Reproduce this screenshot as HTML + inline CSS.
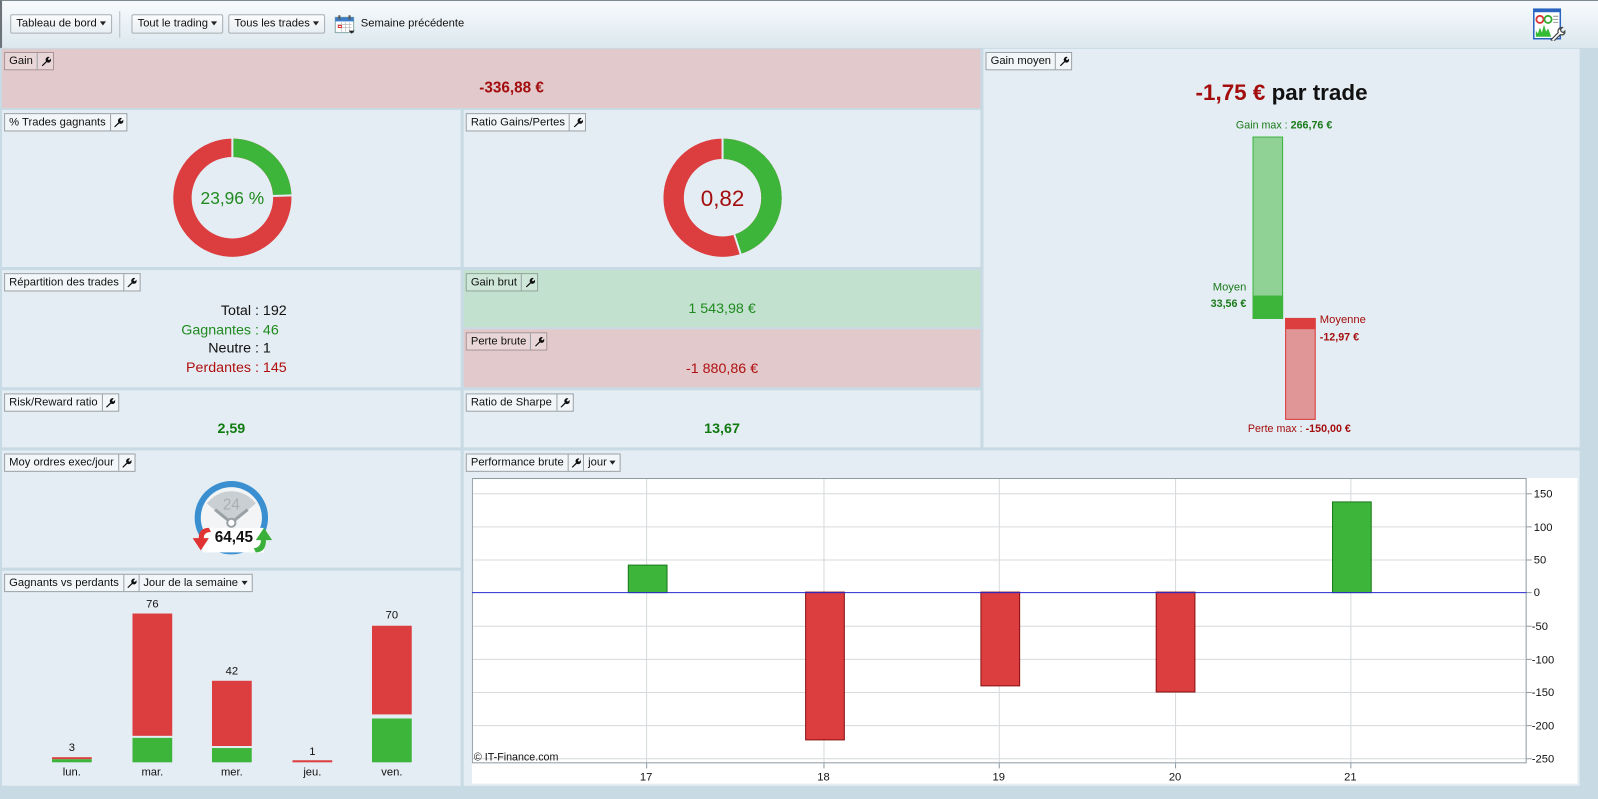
<!DOCTYPE html>
<html><head><meta charset="utf-8"><style>
*{margin:0;padding:0;box-sizing:border-box}
html,body{width:1598px;height:799px;overflow:hidden;background:#c8dae4;font-family:"Liberation Sans",sans-serif}
#w{position:absolute;left:0;top:0;width:1568px;height:784px;transform:scale(1.01913);transform-origin:0 0;background:#c8dae4}
.a{position:absolute}
.p{position:absolute;background:#e4edf3}
.tab{position:absolute;left:2px;top:3px;height:18px;display:flex;font-size:11px;color:#111;background:#f3f6f8;border:1px solid #9aa3a8}
.tab>span{padding:0 4px;line-height:16px;border-right:1px solid #9aa3a8;white-space:nowrap}
.tab>span:last-child{border-right:none}
.tab>.wr{width:15px;padding:0;display:flex;align-items:center;justify-content:center}
.btn{position:absolute;top:14px;height:19px;font-size:11px;line-height:17px;padding:0 5px;border:1px solid #a8afb4;border-radius:2px;background:linear-gradient(#fbfcfd,#e8eef2);color:#111}
.dd{display:inline-block;width:0;height:0;border-left:3.5px solid transparent;border-right:3.5px solid transparent;border-top:4px solid #222;vertical-align:middle;margin-left:3px}
.c{position:absolute;text-align:center}
</style></head><body><div id="w">
<svg width="0" height="0" style="position:absolute"><defs><symbol id="wr" viewBox="0 0 10 10"><path d="M1 9.2L5.2 5a2.6 2.6 0 0 1 .6-3.6 2.7 2.7 0 0 1 2.9-.4L7 2.7l.4 1 1 .3 1.6-1.6a2.7 2.7 0 0 1-.4 2.9A2.6 2.6 0 0 1 6 6L1.8 10z" fill="#111"/></symbol></defs></svg>
<!-- toolbar -->
<div class="a" style="left:0;top:0;width:1568px;height:47px;background:linear-gradient(#f8fbfd,#dbe7ee);border-top:1px solid #7f8a90;border-left:2px solid #6c7378"></div>
<div class="btn" style="left:10px">Tableau de bord<span class="dd"></span></div>
<div class="a" style="left:117px;top:11px;width:1px;height:26px;background:#b5bec4"></div>
<div class="btn" style="left:129px">Tout le trading<span class="dd"></span></div>
<div class="btn" style="left:224px">Tous les trades<span class="dd"></span></div>
<svg class="a" style="left:328px;top:14px" width="21" height="20" viewBox="0 0 21 20"><rect x="1" y="3" width="18" height="15" fill="#fff" stroke="#8aa"/><rect x="1" y="3" width="18" height="4" fill="#3a7cc8"/><rect x="4" y="1" width="2" height="4" fill="#555"/><rect x="14" y="1" width="2" height="4" fill="#555"/><path d="M3 10h14M3 13h14M7 8v9M11 8v9M15 8v9" stroke="#bbb" stroke-width=".7"/><rect x="4" y="11" width="3" height="2" fill="none" stroke="#d33"/><path d="M14 16h6l-3 3z" fill="#222"/></svg>
<div class="a" style="left:354px;top:17px;font-size:11px;color:#111">Semaine précédente</div>
<svg class="a" style="left:1504px;top:8px" width="32" height="32" viewBox="0 0 32 32"><rect x="1" y="1" width="26" height="29" fill="#fff" stroke="#2a64c0" stroke-width="1.5"/><rect x="1" y="1" width="26" height="3" fill="#2a64c0"/><circle cx="7" cy="11" r="3.5" fill="none" stroke="#d33" stroke-width="1.8"/><circle cx="15" cy="11" r="3.5" fill="none" stroke="#3a3" stroke-width="1.8"/><path d="M20 8h5M20 11h5M20 14h5" stroke="#999"/><path d="M3 28V22l2 3 2-6 2 5 2-8 2 7 2-3 2 5 1 3z" fill="#3b3"/><path d="M18 31l7-7c-1-3 1-5 4-5l-2 2 1 2 2 1 2-2c0 3-2 5-5 4l-7 7z" fill="#fff" stroke="#444" stroke-width="1.2"/></svg>

<!-- Gain -->
<div class="p" style="left:2px;top:48px;width:960px;height:58px;background:#e2c9cc"><div class="tab" style="border-color:#a79596;background:#e9d6d8"><span>Gain</span><span class="wr"><svg width="10" height="10"><use href="#wr"/></svg></span></div>
<div class="c" style="left:0;width:1000px;top:30px;font-size:15px;font-weight:bold;color:#a30d0d">-336,88 €</div></div>

<!-- Gain moyen -->
<div class="p" style="left:965px;top:48px;width:585px;height:391px">
<div class="tab"><span>Gain moyen</span><span class="wr"><svg width="10" height="10"><use href="#wr"/></svg></span></div>
<div class="c" style="left:0;width:585px;top:30px;font-size:22px;font-weight:bold;color:#111"><span style="color:#a30d0d">-1,75 €</span> par trade</div>
<div class="c" style="left:195px;width:200px;top:69px;font-size:10.5px;color:#1a7a1a">Gain max : <b>266,76 €</b></div>
<div class="a" style="left:264px;top:86px;width:30px;height:179px;background:#90d196;border:1px solid #3db53d"></div>
<div class="a" style="left:264px;top:242px;width:30px;height:23px;background:#3db43a"></div>
<div class="a" style="left:196px;top:228px;width:62px;text-align:right;font-size:11px;color:#1a7a1a">Moyen</div>
<div class="a" style="left:196px;top:244px;width:62px;text-align:right;font-size:10.5px;font-weight:bold;color:#1a7a1a">33,56 €</div>
<div class="a" style="left:296px;top:264px;width:30px;height:100px;background:#e09597;border:1px solid #d84040"></div>
<div class="a" style="left:296px;top:264px;width:30px;height:11px;background:#dc3d3e"></div>
<div class="a" style="left:330px;top:260px;font-size:11px;color:#a30d0d">Moyenne</div>
<div class="a" style="left:330px;top:277px;font-size:10.5px;font-weight:bold;color:#a30d0d">-12,97 €</div>
<div class="c" style="left:210px;width:200px;top:367px;font-size:10.5px;color:#a30d0d">Perte max : <b>-150,00 €</b></div>
</div>

<!-- % trades gagnants -->
<div class="p" style="left:2px;top:108px;width:450px;height:154px"><div class="tab"><span>% Trades gagnants</span><span class="wr"><svg width="10" height="10"><use href="#wr"/></svg></span></div>
<svg class="a" style="left:166px;top:26px" width="120" height="120" viewBox="0 0 120 120"><g transform="rotate(-90 60 60)"><circle cx="60" cy="60" r="49" fill="none" stroke="#dc3d3e" stroke-width="18"/><circle cx="60" cy="60" r="49" fill="none" stroke="#3db43a" stroke-width="18" stroke-dasharray="75 400"/></g><path d="M60 1V22M99 58.3L119 57.7" stroke="#e4edf3" stroke-width="2"/></svg>
<div class="c" style="left:166px;width:120px;top:77px;font-size:17px;color:#1f8a1f">23,96 %</div></div>

<!-- Ratio -->
<div class="p" style="left:455px;top:108px;width:507px;height:154px"><div class="tab"><span>Ratio Gains/Pertes</span><span class="wr"><svg width="10" height="10"><use href="#wr"/></svg></span></div>
<svg class="a" style="left:194px;top:26px" width="120" height="120" viewBox="0 0 120 120"><g transform="rotate(-90 60 60)"><circle cx="60" cy="60" r="48" fill="none" stroke="#dc3d3e" stroke-width="20"/><circle cx="60" cy="60" r="48" fill="none" stroke="#3db43a" stroke-width="20" stroke-dasharray="136 400"/></g><path d="M60 1V22M71.5 96L78 116" stroke="#e4edf3" stroke-width="2"/></svg>
<div class="c" style="left:194px;width:120px;top:74px;font-size:22px;color:#a30d0d">0,82</div></div>

<!-- Repartition -->
<div class="p" style="left:2px;top:265px;width:450px;height:115px"><div class="tab"><span>Répartition des trades</span><span class="wr"><svg width="10" height="10"><use href="#wr"/></svg></span></div>
<div class="a" style="left:0;top:30px;width:450px;font-size:14px;line-height:18.7px">
<div style="display:flex"><div style="width:256px;text-align:right;color:#111">Total :&nbsp;</div><div style="color:#111">192</div></div>
<div style="display:flex"><div style="width:256px;text-align:right;color:#1f8a1f">Gagnantes :&nbsp;</div><div style="color:#1f8a1f">46</div></div>
<div style="display:flex"><div style="width:256px;text-align:right;color:#111">Neutre :&nbsp;</div><div style="color:#111">1</div></div>
<div style="display:flex"><div style="width:256px;text-align:right;color:#b01010">Perdantes :&nbsp;</div><div style="color:#b01010">145</div></div>
</div></div>

<!-- Gain brut / Perte brute -->
<div class="p" style="left:455px;top:265px;width:507px;height:56px;background:#c3e1cf"><div class="tab" style="background:#cfe7d9;border-color:#8fa597"><span>Gain brut</span><span class="wr"><svg width="10" height="10"><use href="#wr"/></svg></span></div>
<div class="c" style="left:0;width:507px;top:29px;font-size:14px;color:#1f8a1f">1 543,98 €</div></div>
<div class="p" style="left:455px;top:323px;width:507px;height:57px;background:#e2c9cc"><div class="tab" style="background:#e9d6d8;border-color:#a79596"><span>Perte brute</span><span class="wr"><svg width="10" height="10"><use href="#wr"/></svg></span></div>
<div class="c" style="left:0;width:507px;top:30px;font-size:14px;color:#b01010">-1 880,86 €</div></div>

<!-- Risk / Sharpe -->
<div class="p" style="left:2px;top:383px;width:450px;height:56px"><div class="tab"><span>Risk/Reward ratio</span><span class="wr"><svg width="10" height="10"><use href="#wr"/></svg></span></div>
<div class="c" style="left:0;width:450px;top:29px;font-size:14px;font-weight:bold;color:#107a10">2,59</div></div>
<div class="p" style="left:455px;top:383px;width:507px;height:56px"><div class="tab"><span>Ratio de Sharpe</span><span class="wr"><svg width="10" height="10"><use href="#wr"/></svg></span></div>
<div class="c" style="left:0;width:507px;top:29px;font-size:14px;font-weight:bold;color:#107a10">13,67</div></div>

<!-- Moy ordres -->
<div class="p" style="left:2px;top:442px;width:450px;height:115px"><div class="tab"><span>Moy ordres exec/jour</span><span class="wr"><svg width="10" height="10"><use href="#wr"/></svg></span></div>
<svg class="a" style="left:183px;top:28px" width="90" height="80" viewBox="0 0 90 80"><circle cx="42" cy="38" r="36" fill="#3a8fd0"/><circle cx="42" cy="38" r="30" fill="#f2f4f5"/><path d="M18 24A30 30 0 0 1 66 24L42 44Z" fill="#c9cfd2"/><text x="42" y="30" font-size="15" fill="#a8aeb2" text-anchor="middle" font-family="Liberation Sans">24</text><path d="M26 30L42 43L58 30" stroke="#9aa1a5" stroke-width="3" fill="none"/><circle cx="42" cy="43" r="4" fill="#fff" stroke="#9aa1a5" stroke-width="2"/><rect x="14" y="48" width="60" height="24" fill="#fff"/><path d="M20 48Q10 48 10 58L4 58L12 70L20 58L15 58Q15 52 22 52Z" fill="#e03434"/><path d="M66 72Q76 72 76 60L82 60L74 48L66 60L71 60Q71 67 64 68Z" fill="#3ab03a"/></svg>
<div class="c" style="left:200px;width:55px;top:77px;font-size:15px;font-weight:bold;color:#111">64,45</div></div>

<!-- Gagnants vs perdants -->
<div class="p" style="left:2px;top:560px;width:450px;height:211px"><div class="tab"><span>Gagnants vs perdants</span><span class="wr"><svg width="10" height="10"><use href="#wr"/></svg></span><span>Jour de la semaine<span class="dd"></span></span></div></div>
<div class="a" style="left:51px;top:743px;width:39px;height:2px;background:#dc3d3e"></div>
<div class="a" style="left:51px;top:745px;width:39px;height:3px;background:#3db43a"></div>
<div class="a" style="left:130px;top:602px;width:39px;height:120px;background:#dc3d3e"></div>
<div class="a" style="left:130px;top:724px;width:39px;height:24px;background:#3db43a"></div>
<div class="a" style="left:208px;top:668px;width:39px;height:64px;background:#dc3d3e"></div>
<div class="a" style="left:208px;top:734px;width:39px;height:14px;background:#3db43a"></div>
<div class="a" style="left:287px;top:746px;width:39px;height:2px;background:#dc3d3e"></div>
<div class="a" style="left:365px;top:614px;width:39px;height:87px;background:#dc3d3e"></div>
<div class="a" style="left:365px;top:705px;width:39px;height:43px;background:#3db43a"></div>
<div style="font-size:11px;color:#111">
<div class="c" style="left:51px;width:39px;top:728px">3</div>
<div class="c" style="left:130px;width:39px;top:587px">76</div>
<div class="c" style="left:208px;width:39px;top:653px">42</div>
<div class="c" style="left:287px;width:39px;top:732px">1</div>
<div class="c" style="left:365px;width:39px;top:598px">70</div>
<div class="c" style="left:41px;width:59px;top:752px">lun.</div>
<div class="c" style="left:120px;width:59px;top:752px">mar.</div>
<div class="c" style="left:198px;width:59px;top:752px">mer.</div>
<div class="c" style="left:277px;width:59px;top:752px">jeu.</div>
<div class="c" style="left:355px;width:59px;top:752px">ven.</div>
</div>

<!-- Performance brute -->
<div class="p" style="left:455px;top:442px;width:1095px;height:329px"><div class="tab"><span>Performance brute</span><span class="wr"><svg width="10" height="10"><use href="#wr"/></svg></span><span>jour<span class="dd"></span></span></div></div>
<svg class="a" style="left:463px;top:469px" width="1085" height="300" viewBox="463 469 1085 300" font-family="Liberation Sans" font-size="11">
<rect x="463" y="469" width="1085" height="300" fill="#fff"/>
<g stroke="#d6dadd" stroke-width="1">
<path d="M463 484.5H1498M463 517H1498M463 549.5H1498M463 614.5H1498M463 647H1498M463 679.5H1498M463 712H1498M463 744.5H1498"/>
<path d="M634.5 469V749M808.5 469V749M980.5 469V749M1153.5 469V749M1325.5 469V749"/>
</g>
<rect x="463.5" y="469.5" width="1034" height="279" fill="none" stroke="#8e9ba3"/>
<g stroke="#1a7a1a"><rect x="616.5" y="554.5" width="38" height="27" fill="#3db43a"/><rect x="1307.5" y="492.5" width="38" height="89" fill="#3db43a"/></g>
<g stroke="#8a1010"><rect x="790.5" y="581" width="38" height="145" fill="#dc3d3e"/><rect x="962.5" y="581" width="38" height="92" fill="#dc3d3e"/><rect x="1134.5" y="581" width="38" height="98" fill="#dc3d3e"/></g>
<path d="M463 581.5H1498" stroke="#2a2ad0"/>
<g stroke="#8e9ba3"><path d="M1498 484.5h5M1498 517h5M1498 549.5h5M1498 581.5h5M1498 614.5h5M1498 647h5M1498 679.5h5M1498 712h5M1498 744.5h5M634.5 749v5M808.5 749v5M980.5 749v5M1153.5 749v5M1325.5 749v5"/></g>
<g fill="#111"><text x="1505" y="488">150</text><text x="1505" y="521">100</text><text x="1505" y="553">50</text><text x="1505" y="585">0</text><text x="1503" y="618">-50</text><text x="1503" y="651">-100</text><text x="1503" y="683">-150</text><text x="1503" y="716">-200</text><text x="1503" y="748">-250</text>
<text x="634" y="766" text-anchor="middle">17</text><text x="808" y="766" text-anchor="middle">18</text><text x="980" y="766" text-anchor="middle">19</text><text x="1153" y="766" text-anchor="middle">20</text><text x="1325" y="766" text-anchor="middle">21</text>
<text x="465" y="746" font-size="10.5">© IT-Finance.com</text></g>
</svg>
</div></body></html>
